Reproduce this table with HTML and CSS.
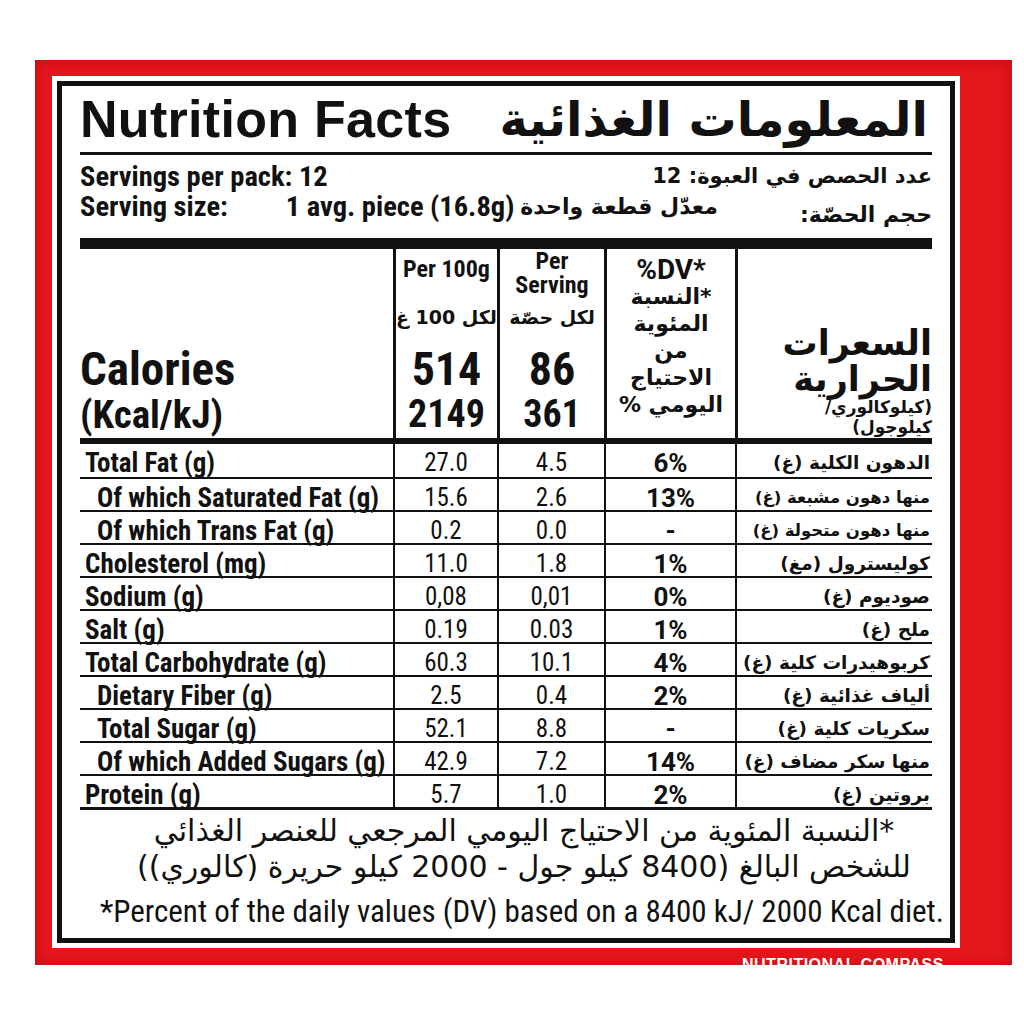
FILE: index.html
```html
<!DOCTYPE html>
<html lang="en">
<head>
<meta charset="utf-8">
<title>Nutrition Facts</title>
<link rel="stylesheet" href="styles.css">
</head>
<body>
<div class="pack">
  <div class="label">
    <div class="frame">
      <div class="title-row">
        <h1 class="title-en">Nutrition Facts</h1>
        <h1 class="title-ar" dir="rtl">المعلومات الغذائية</h1>
      </div>
      <div class="serv">
        <div class="serv-row">
          <span class="en">Servings per pack: 12</span>
          <span class="ar" dir="rtl">عدد الحصص في العبوة: 12</span>
        </div>
        <div class="serv-row">
          <span class="en size-lbl">Serving size:</span>
          <span class="en size-val">1 avg. piece (16.8g)</span>
          <span class="ar size-ar" dir="rtl">معدّل قطعة واحدة</span>
          <span class="ar size-ar2" dir="rtl">حجم الحصّة:</span>
        </div>
      </div>
      <div class="bar"></div>
      <div class="head">
        <div class="h-cal">
          <div class="cal">Calories</div>
          <div class="kcal">(Kcal/kJ)</div>
        </div>
        <div class="h-c1 top">
          <div class="ph">Per 100g</div>
          <div class="ph-ar" dir="rtl">لكل 100 غ</div>
        </div>
        <div class="h-c2 top">
          <div class="ph ph-s1">Per</div>
          <div class="ph ph-s2">Serving</div>
          <div class="ph-ar ph-ar2" dir="rtl">لكل حصّة</div>
        </div>
        <div class="h-c1 nums">
          <div class="big">514</div>
          <div class="mid">2149</div>
        </div>
        <div class="h-c2 nums">
          <div class="big">86</div>
          <div class="mid">361</div>
        </div>
        <div class="h-dv">
          <div class="dv">%DV*</div>
          <div class="dv-ar" dir="rtl">*النسبة</div>
          <div class="dv-ar" dir="rtl">المئوية</div>
          <div class="dv-ar" dir="rtl">من</div>
          <div class="dv-ar" dir="rtl">الاحتياج</div>
          <div class="dv-ar" dir="rtl">اليومي %</div>
        </div>
        <div class="h-ar">
          <div class="cal-ar" dir="rtl">السعرات</div>
          <div class="cal-ar" dir="rtl">الحرارية</div>
          <div class="unit-ar" dir="rtl">(كيلوكالوري/</div>
          <div class="unit-ar" dir="rtl">كيلوجول)</div>
        </div>
      </div>
      <div class="rows">
        <div class="r-lbl">Total Fat (g)</div><div class="r-v">27.0</div><div class="r-v">4.5</div><div class="r-dv">6%</div><div class="r-ar" dir="rtl">الدهون الكلية (غ)</div>
        <div class="r-lbl ind">Of which Saturated Fat (g)</div><div class="r-v">15.6</div><div class="r-v">2.6</div><div class="r-dv">13%</div><div class="r-ar tight" dir="rtl">منها دهون مشبعة (غ)</div>
        <div class="r-lbl ind">Of which Trans Fat (g)</div><div class="r-v">0.2</div><div class="r-v">0.0</div><div class="r-dv">-</div><div class="r-ar tight" dir="rtl">منها دهون متحولة (غ)</div>
        <div class="r-lbl">Cholesterol (mg)</div><div class="r-v">11.0</div><div class="r-v">1.8</div><div class="r-dv">1%</div><div class="r-ar" dir="rtl">كوليسترول (مغ)</div>
        <div class="r-lbl">Sodium (g)</div><div class="r-v">0,08</div><div class="r-v">0,01</div><div class="r-dv">0%</div><div class="r-ar" dir="rtl">صوديوم (غ)</div>
        <div class="r-lbl">Salt (g)</div><div class="r-v">0.19</div><div class="r-v">0.03</div><div class="r-dv">1%</div><div class="r-ar" dir="rtl">ملح (غ)</div>
        <div class="r-lbl">Total Carbohydrate (g)</div><div class="r-v">60.3</div><div class="r-v">10.1</div><div class="r-dv">4%</div><div class="r-ar" dir="rtl">كربوهيدرات كلية (غ)</div>
        <div class="r-lbl ind">Dietary Fiber (g)</div><div class="r-v">2.5</div><div class="r-v">0.4</div><div class="r-dv">2%</div><div class="r-ar" dir="rtl">ألياف غذائية (غ)</div>
        <div class="r-lbl ind">Total Sugar (g)</div><div class="r-v">52.1</div><div class="r-v">8.8</div><div class="r-dv">-</div><div class="r-ar" dir="rtl">سكريات كلية (غ)</div>
        <div class="r-lbl ind">Of which Added Sugars (g)</div><div class="r-v">42.9</div><div class="r-v">7.2</div><div class="r-dv">14%</div><div class="r-ar" dir="rtl">منها سكر مضاف (غ)</div>
        <div class="r-lbl">Protein (g)</div><div class="r-v">5.7</div><div class="r-v">1.0</div><div class="r-dv">2%</div><div class="r-ar" dir="rtl">بروتين (غ)</div>
      </div>
      <div class="foot">
        <p class="foot-ar" dir="rtl">*النسبة المئوية من الاحتياج اليومي المرجعي للعنصر الغذائي</p>
        <p class="foot-ar" dir="rtl">للشخص البالغ (8400 كيلو جول - 2000 كيلو حريرة (كالوري))</p>
        <p class="foot-en">*Percent of the daily values (DV) based on a 8400 kJ/ 2000 Kcal diet.</p>
      </div>
    </div>
  </div>
  <div class="compass">NUTRITIONAL COMPASS</div>
</div>
</body>
</html>
```
FILE: styles.css
```css
* { box-sizing: border-box; margin: 0; padding: 0; }
html, body { background: #ffffff; }
body {
  margin: 0;
  color: #111;
  font-family: "Roboto", "Liberation Sans", Arial, sans-serif;
  font-stretch: 75%;
}
.ar, .title-ar, .ph-ar, .dv-ar, .cal-ar, .unit-ar, .r-ar, .foot-ar {
  font-family: "DejaVu Sans", "Noto Sans", sans-serif;
  font-stretch: normal;
}

.pack {
  margin: 60px 0 0 35px;
  width: 977px;
  height: 905px;
  background: #e5161c;
  padding: 16px 0 0 17px;
  overflow: hidden;
  box-shadow: inset 0 0 14px rgba(110, 0, 0, 0.35);
}
.label {
  width: 908px;
  height: 872px;
  background: #fff;
  padding: 5px;
}
.frame {
  height: 100%;
  border: 5px solid #111;
  padding: 0 18px;
  overflow: hidden;
}

/* title */
.title-row {
  height: 69px;
  border-bottom: 3px solid #111;
  display: flex;
  align-items: center;
  justify-content: space-between;
}
.title-en {
  font-family: "Liberation Sans", Arial, sans-serif;
  font-stretch: normal;
  font-weight: 700;
  font-size: 52px;
  letter-spacing: 0.3px;
  line-height: 66px;
}
.title-ar {
  font-weight: 700;
  font-size: 48px;
  line-height: 66px;
  padding-right: 4px;
}

/* servings */
.serv {
  height: 83px;
  padding-top: 6px;
}
.serv-row {
  display: flex;
  align-items: center;
  height: 30px;
}
.en {
  font-weight: 700;
  font-size: 28.5px;
  font-stretch: 75%;
}
.serv-row .ar {
  font-weight: 700;
  font-size: 21px;
  margin-left: auto;
}
.size-val { margin-left: 58px; }
.serv-row .size-ar { margin-left: 6px; font-size: 22px; }
.serv-row .size-ar2 { margin-left: auto; position: relative; top: 8px; font-size: 22px; }

.bar { height: 11px; background: #111; }

/* header */
.head {
  height: 195px;
  display: grid;
  grid-template-columns: 313px 104px 107px 131px minmax(0, 1fr);
  grid-template-rows: 102px 87px;
  border-bottom: 6px solid #111;
}
.h-cal { grid-column: 1; grid-row: 2; }
.cal {
  font-weight: 700;
  font-size: 47px;
  line-height: 36px;
}
.kcal {
  font-weight: 700;
  font-size: 39px;
  line-height: 56px;
}
.h-c1, .h-c2, .h-dv, .h-ar { border-left: 3px solid #111; text-align: center; }
.h-c1.top { grid-column: 2; grid-row: 1; padding-top: 6px; }
.h-c2.top { grid-column: 3; grid-row: 1; padding-top: 0; }
.h-c1.nums { grid-column: 2; grid-row: 2; }
.h-c2.nums { grid-column: 3; grid-row: 2; }
.ph { font-weight: 700; font-size: 24px; line-height: 28px; white-space: nowrap; }
.ph-s1 { line-height: 24px; }
.ph-s2 { line-height: 24px; }
.ph-ar { font-weight: 700; font-size: 19px; line-height: 68px; white-space: nowrap; }
.ph-ar2 { line-height: 40px; }
.big { font-weight: 700; font-size: 46px; line-height: 36px; }
.mid { font-weight: 700; font-size: 38px; line-height: 54px; }
.h-dv { grid-column: 4; grid-row: 1 / 3; padding-top: 7px; }
.dv { font-weight: 700; font-size: 28px; font-stretch: 90%; line-height: 27px; }
.dv-ar { font-weight: 700; font-size: 22px; line-height: 27px; }
.h-ar {
  grid-column: 5; grid-row: 1 / 3;
  display: flex; flex-direction: column; justify-content: flex-end;
  text-align: right;
  padding-bottom: 1px;
}
.cal-ar { font-weight: 700; font-size: 35px; line-height: 36px; }
.unit-ar { font-weight: 700; font-size: 17px; line-height: 20px; white-space: nowrap; }

/* rows */
.rows {
  display: grid;
  grid-template-columns: 313px 104px 107px 131px minmax(0, 1fr);
  grid-auto-rows: 33px;
  border-bottom: 3px solid #111;
}
.rows > div {
  border-top: 2px solid #111;
  padding-top: 4px;
  line-height: 30px;
  white-space: nowrap;
}
.rows > div:nth-child(-n+5) { border-top: 0; }
.r-lbl { font-weight: 700; font-size: 27px; font-stretch: 75%; padding-left: 5px; }
.r-lbl.ind { padding-left: 17px; }
.r-v, .r-dv, .r-ar { border-left: 2px solid #111; }
.r-v { text-align: center; font-size: 25px; font-weight: 400; font-stretch: 86%; }
.r-dv { text-align: center; font-size: 26px; font-weight: 700; font-stretch: 88%; }
.r-ar { text-align: right; font-size: 18.5px; font-weight: 700; padding-right: 2px; overflow: hidden; }
.r-ar.tight { font-size: 16.5px; }

/* foot */
.foot { padding-top: 3px; text-align: center; }
.foot-ar { font-size: 30px; line-height: 36px; white-space: nowrap; padding-left: 36px; }
.foot-en { font-size: 31px; font-stretch: 75%; line-height: 50px; margin-top: 2px; white-space: nowrap; padding-left: 20px; }

.compass {
  margin: 7px 0 0 690px;
  color: #fff;
  font-family: "Liberation Sans", Arial, sans-serif;
  font-stretch: normal;
  font-weight: 700;
  font-size: 16px;
  letter-spacing: 0.5px;
  line-height: 20px;
  white-space: nowrap;
}
```
